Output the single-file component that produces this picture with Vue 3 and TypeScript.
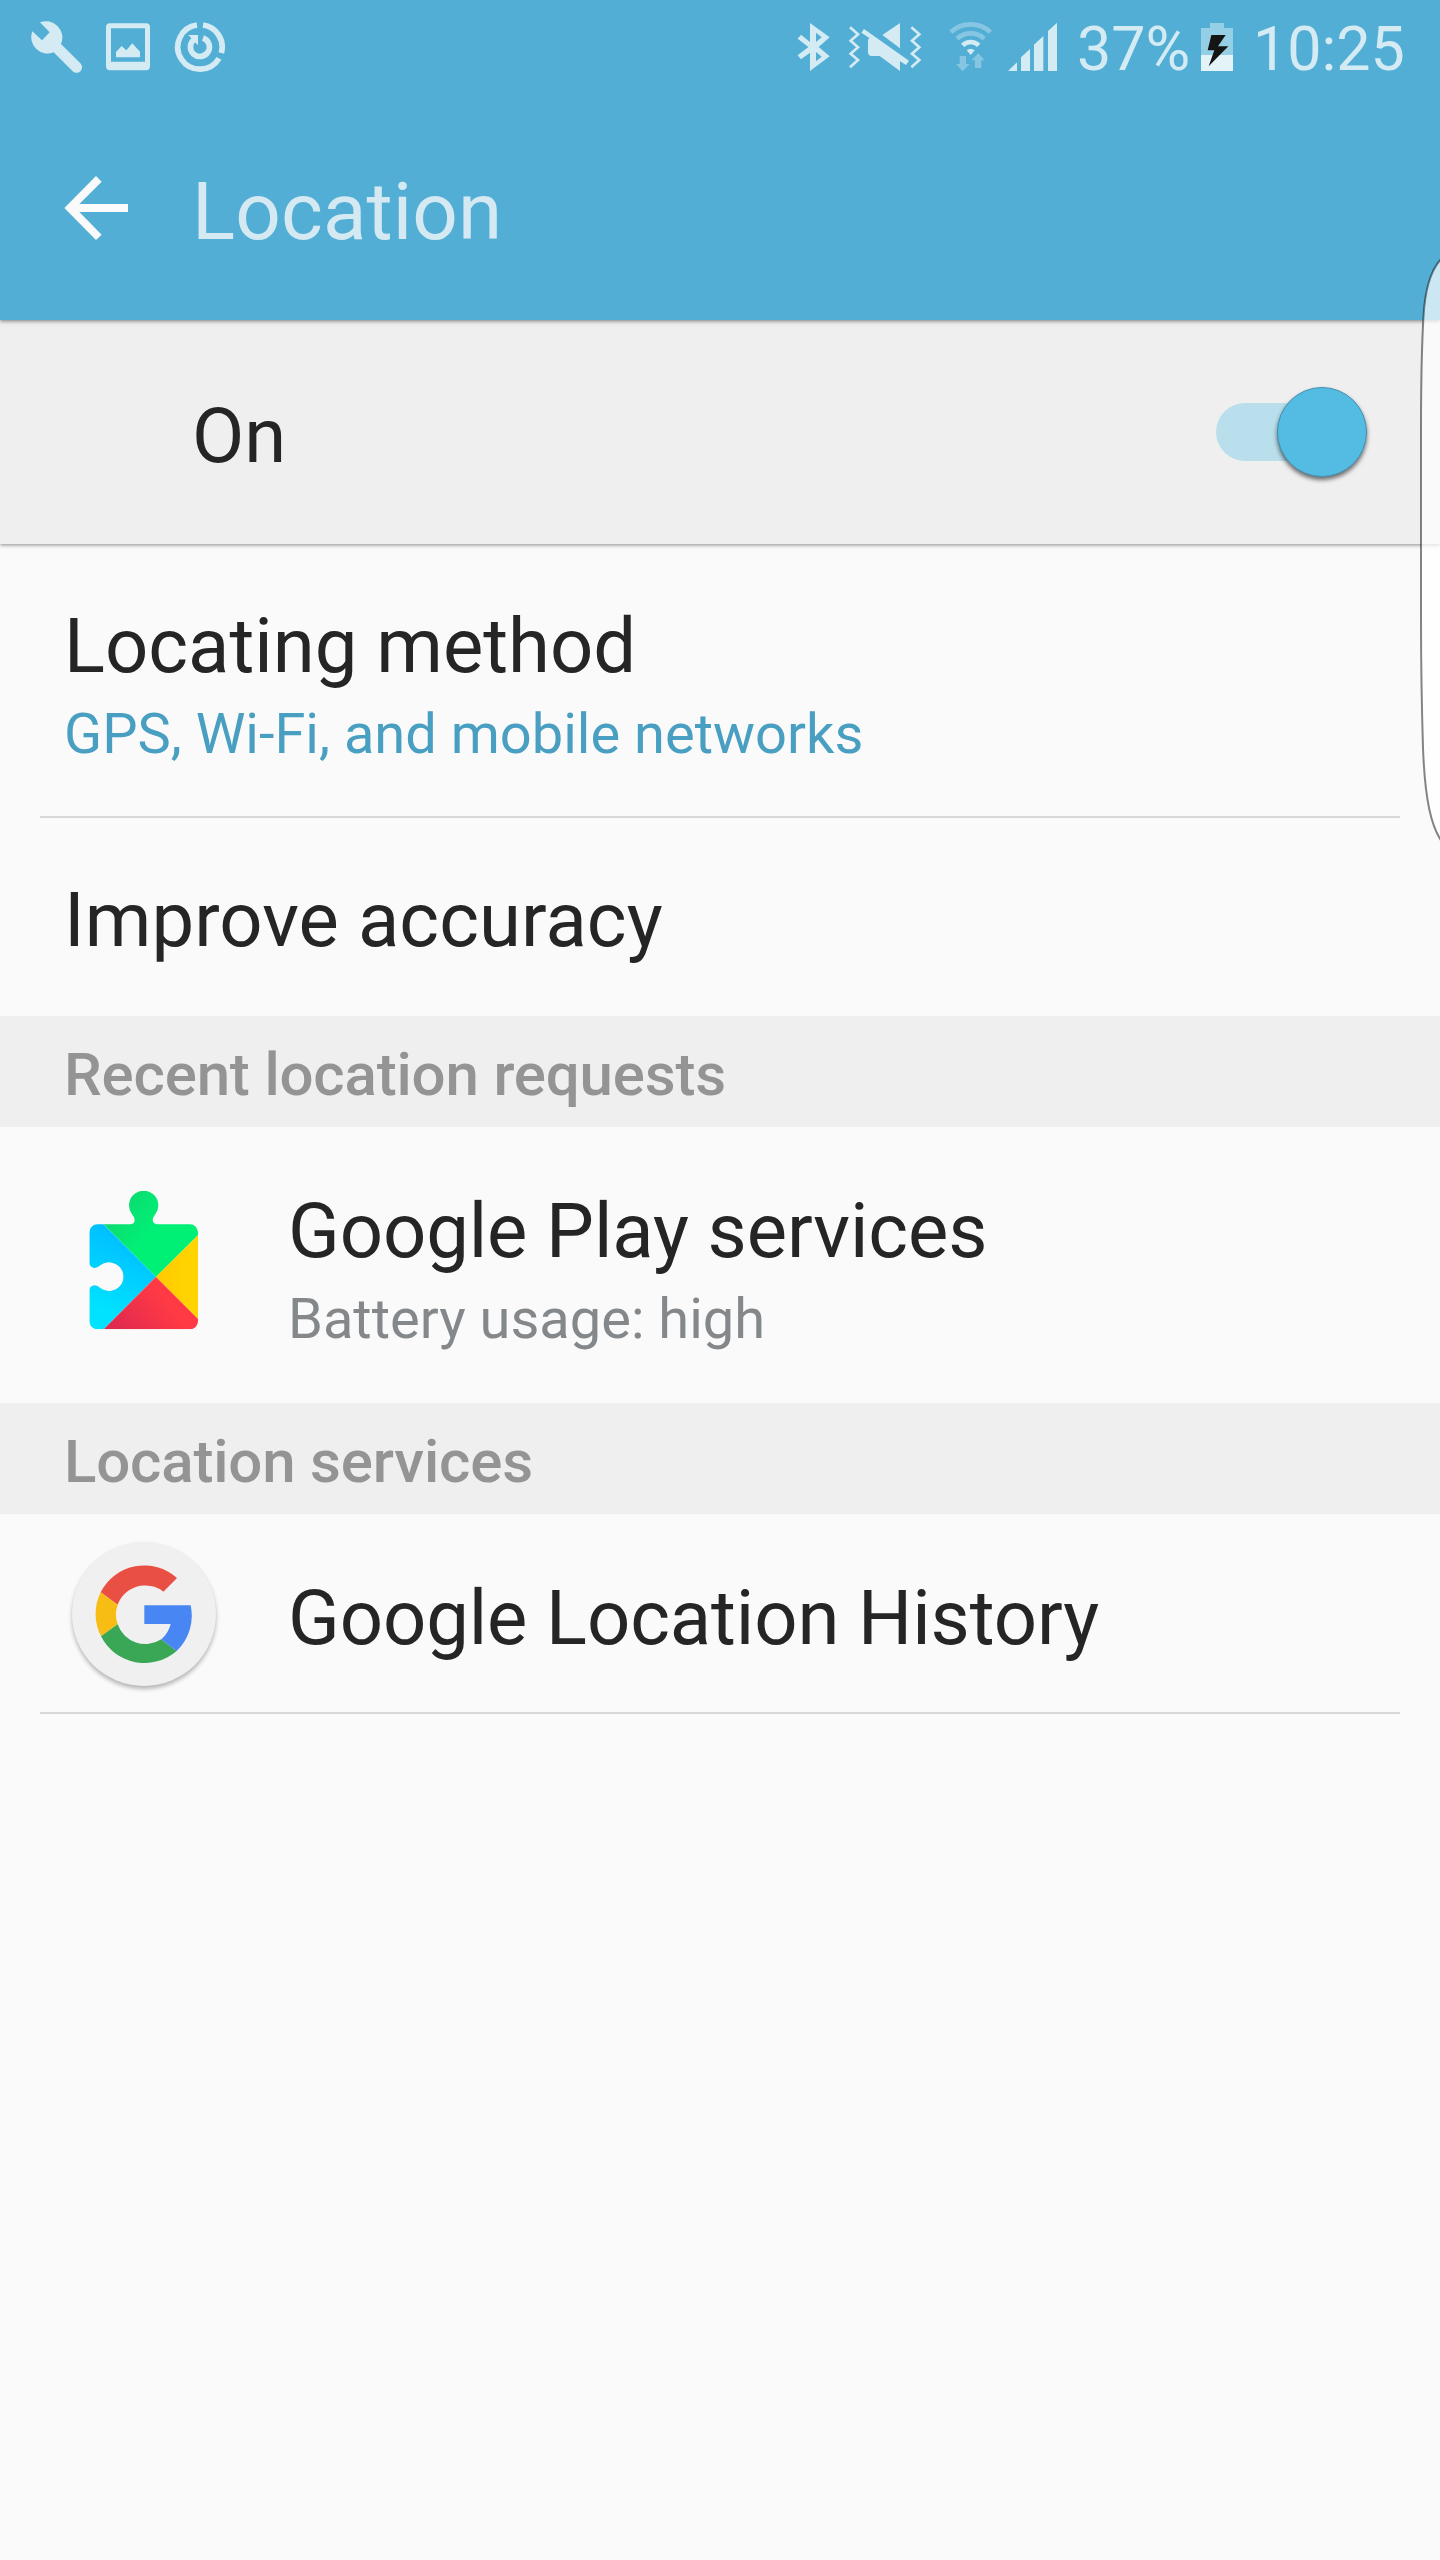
<script setup lang="ts">
import { ref } from 'vue'

const enabled = ref<boolean>(true)
const battery = '37%'
const clock = '10:25'
</script>

<template>
  <div class="screen">
    <header class="header">
      <div class="status">
        <div class="status-left">
          <svg class="wrench" width="54" height="54" viewBox="87 60 162 162">
            <path d="M120 67A49 49 0 0 1 183 132L241 190A15.500 15.500 0 0 1 218 214L161 157A49 49 0 0 1 97 94L126 121L149 97Z" />
          </svg>
          <svg class="gallery" width="44" height="48" viewBox="318 70 132 144">
            <path fill-rule="evenodd" d="M330 71H438Q450 71 450 83V200Q450 212 438 212H330Q318 212 318 200V83Q318 71 330 71ZM333 86V186H435V86ZM348 173V157L365 139L379 152L397 131L420 156V173Z" />
          </svg>
          <svg class="sync" width="52" height="52" viewBox="522 63 156 156">
            <g fill="none" stroke="#d4ebf4" stroke-width="17">
              <path d="M609 75.100A66.500 66.500 0 0 1 664 159" />
              <path d="M657 175A66.500 66.500 0 1 1 591 75.100" />
              <path d="M609 114A28.500 28.500 0 1 1 583 118" />
            </g>
            <path d="M565 105H594V136Z" />
          </svg>
        </div>
        <div class="status-right">
          <svg class="bluetooth" width="34" height="50" viewBox="51 66 102 150">
            <path fill-rule="evenodd" d="M90 69L149 112L116 141L149 169L90 213V158L63 178L53 166L85 141L53 116L63 104L90 126ZM108 98V126L125 112ZM108 156V184L125 170Z" />
          </svg>
          <svg class="mute" width="74" height="50" viewBox="204 66 222 150">
            <g fill="none" stroke="#d4ebf4" stroke-width="8">
              <path d="M210 82L234 103L212 122L234 142L212 161L234 180L210 202" />
              <path d="M394 82L418 103L396 122L418 142L396 161L418 180L394 202" />
            </g>
            <path d="M307 105L360 69V145Z" />
            <path d="M252 87L387 182L378 195L360 184V213L299 168H275Q264 168 264 156V122Q264 116 268 114L244 98Z" />
          </svg>
          <svg class="wifi" width="46" height="52" viewBox="504 63 138 156">
            <g fill="none" stroke="#d4ebf4" stroke-width="14">
              <path opacity=".4" d="M512.700 96.400A87 87 0 0 1 631.300 96.400" />
              <path opacity=".4" d="M531.100 116.100A60 60 0 0 1 612.900 116.100" />
              <path d="M548 136A34 34 0 0 1 596 136" />
            </g>
            <path d="M560 151Q572 141 584 151L572 165Z" />
            <path opacity=".4" d="M539 168H558V192H569L548 214L528 192H539ZM595 160L614 181H604V204H585V181H575Z" />
          </svg>
          <svg class="signal" width="50" height="50" viewBox="684 66 150 150">
            <path d="M684 213L711 187V213ZM723 213V172L750 147V213ZM762 213V134L790 108V213ZM804 213V93L831 68V213Z" />
          </svg>
          <span class="percent">{{ battery }}</span>
          <svg class="battery" width="32" height="48" viewBox="423 69 96 144">
            <path fill="#95cfe5" d="M450 69H492V84H519V165H423V84H450Z" />
            <path fill="#e4f3f8" d="M423 165H519V213H423Z" />
            <path fill="#151515" d="M454 105H497L474 139H505L446 199L463 151H443Z" />
          </svg>
          <span class="clock">{{ clock }}</span>
        </div>
      </div>
      <div class="toolbar">
        <svg class="back" width="64" height="66" viewBox="72 75 192 198">
          <path fill="#fafafa" d="M73 174L168 78L185 95L118 162H264V186H118L185 254L168 270Z" />
        </svg>
        <h1>Location</h1>
      </div>
    </header>

    <section class="master">
      <span class="title">On</span>
      <button class="switch" role="switch" :aria-checked="enabled" aria-label="Location" @click="enabled = !enabled">
        <span class="thumb" :class="{ off: !enabled }"></span>
      </button>
    </section>

    <main>
      <section class="row method">
        <div class="title">Locating method</div>
        <div class="sub accent">GPS, Wi-Fi, and mobile networks</div>
      </section>
      <div class="divider"></div>
      <section class="row improve">
        <div class="title">Improve accuracy</div>
      </section>
      <h2>Recent location requests</h2>
      <section class="row app play">
        <svg class="play-icon" width="120" height="150" viewBox="72 54 360 450">
          <defs>
            <clipPath id="piece">
              <path d="M112 163H212Q224 161 224 150Q223 140 216 133A44 44 0 1 1 286 133Q278 142 278 150Q279 161 291 163H390A24 24 0 0 1 414 187V454A24 24 0 0 1 390 478H112A24 24 0 0 1 88 454V360Q90 347 104 346Q113 346 121 354A43 43 0 1 0 121 286Q113 294 104 294Q90 292 88 280V187A24 24 0 0 1 112 163Z" />
            </clipPath>
            <linearGradient id="green" gradientUnits="userSpaceOnUse" x1="170" y1="130" x2="260" y2="200">
              <stop offset="0" stop-color="#0cdc70" />
              <stop offset="1" stop-color="#00f076" />
            </linearGradient>
            <linearGradient id="blue" gradientUnits="userSpaceOnUse" x1="190" y1="190" x2="90" y2="400">
              <stop offset="0" stop-color="#00beff" />
              <stop offset="1" stop-color="#00e2ff" />
            </linearGradient>
            <linearGradient id="red" gradientUnits="userSpaceOnUse" x1="310" y1="380" x2="170" y2="490">
              <stop offset="0" stop-color="#ff3a44" />
              <stop offset="1" stop-color="#df2850" />
            </linearGradient>
            <linearGradient id="yellow" x1="1" y1="0" x2="0" y2="0">
              <stop offset="0" stop-color="#ffd800" />
              <stop offset="1" stop-color="#ffca00" />
            </linearGradient>
          </defs>
          <g clip-path="url(#piece)">
            <path fill="url(#blue)" d="M60 92L288 320L60 549Z" />
            <path fill="url(#red)" d="M288 320L440 472V500H109Z" />
            <path fill="url(#yellow)" d="M288 320L440 169V472Z" />
            <path fill="url(#green)" d="M131 163V40H440V169L288 320Z" />
          </g>
        </svg>
        <div class="texts">
          <div class="title">Google Play services</div>
          <div class="sub">Battery usage: high</div>
        </div>
      </section>
      <h2>Location services</h2>
      <section class="row app history">
        <div class="google-icon">
          <svg width="98" height="98" viewBox="134 134 294 294">
            <path fill="#ea4f43" d="M151 216A146.500 146.500 0 0 1 380 173L339 214A88 88 0 0 0 202 253Z" />
            <path fill="#f8bd15" d="M151 216L202 253A88 88 0 0 0 202 312L152 348A146.500 146.500 0 0 1 151 216Z" />
            <path fill="#3aa757" d="M152 348L202 312A88 88 0 0 0 333 357L379 392A146.500 146.500 0 0 1 152 348Z" />
            <path fill="#4786f3" d="M282 255H421A146.500 146.500 0 0 1 379 392L333 357A88 88 0 0 0 361 311H282Z" />
          </svg>
        </div>
        <div class="title">Google Location History</div>
      </section>
      <div class="divider"></div>
    </main>

    <svg class="edge" width="24" height="600" viewBox="1416 250 24 600">
      <path
        fill="rgba(255,255,255,.7)"
        stroke="rgba(0,0,0,.48)"
        stroke-width="2"
        d="M1442 258C1430 270 1425 290 1423.500 316C1421.500 350 1421 380 1421 430V620C1421 680 1422 715 1423 748C1425 800 1431 826 1442 842Z"
      />
    </svg>
  </div>
</template>

<style>
body {
  margin: 0;
  background: #fafafa;
}
</style>

<style scoped>
.screen {
  position: relative;
  width: 1440px;
  height: 2560px;
  overflow: hidden;
  background: #fafafa;
  color: #252525;
  font-family: Roboto, 'Liberation Sans', sans-serif;
}
.header {
  position: relative;
  z-index: 1;
  height: 320px;
  background: #52aed5;
  box-shadow: 0 1px 4px rgba(0, 0, 0, 0.5);
}
.status {
  display: flex;
  justify-content: space-between;
  height: 96px;
  color: #d4ebf4;
  fill: #d4ebf4;
  font-size: 61px;
  line-height: 70px;
}
.status-left,
.status-right {
  display: flex;
  align-items: flex-start;
}
.status svg {
  flex: none;
}
.status span {
  flex: none;
  margin-top: 14px;
  white-space: nowrap;
}
.wrench {
  margin: 20px 0 0 29px;
}
.gallery {
  margin: 23.33px 0 0 23px;
}
.sync {
  margin: 21px 0 0 24px;
}
.status-right {
  width: 643px;
}
.bluetooth {
  margin-top: 22px;
}
.mute {
  margin: 22px 0 0 17px;
}
.wifi {
  margin: 21px 0 0 26px;
}
.signal {
  margin: 22px 0 0 14px;
}
.status .percent {
  width: 113px;
  margin-left: 19px;
}
.battery {
  margin: 23px 0 0 11px;
}
.status .clock {
  margin-left: 20px;
}
.toolbar {
  display: flex;
  align-items: flex-start;
}
.back {
  margin: 79px 0 0 64px;
}
h1 {
  margin: 69px 0 0 64px;
  font-size: 80px;
  line-height: 94px;
  font-weight: 400;
  letter-spacing: 0.1px;
  color: #d5e9f2;
}
.master {
  display: flex;
  justify-content: space-between;
  box-sizing: border-box;
  height: 224px;
  padding: 71px 73px 0 192px;
  background: #efefef;
  box-shadow: 0 1px 4px rgba(0, 0, 0, 0.45);
}
.title {
  font-size: 76px;
  line-height: 90px;
  white-space: nowrap;
}
.switch {
  display: flex;
  align-items: center;
  justify-content: flex-end;
  width: 151px;
  height: 58px;
  margin: 12px 0 0;
  padding: 0;
  border: 0;
  border-radius: 29px;
  background: linear-gradient(90deg, #b9dfec 120px, transparent 120px);
}
.thumb {
  flex: none;
  box-sizing: border-box;
  width: 90px;
  height: 90px;
  border: 1px solid #4291b0;
  border-radius: 50%;
  background: #54bbe2;
  box-shadow: 0 3px 4px rgba(0, 0, 0, 0.55);
}
.thumb.off {
  margin-right: auto;
}
.row {
  box-sizing: border-box;
  padding: 57px 64px 0;
}
.method {
  height: 272px;
}
.improve {
  height: 198px;
}
.improve .title {
  letter-spacing: 0.08px;
}
.sub {
  margin-top: 10px;
  font-size: 56px;
  line-height: 66px;
  color: #84888b;
  white-space: nowrap;
}
.accent {
  color: #499fc1;
}
.divider {
  height: 2px;
  margin: 0 40px;
  background: #d8d8d8;
}
h2 {
  box-sizing: border-box;
  height: 111px;
  margin: 0;
  padding: 24px 64px 0;
  background: #efefef;
  color: #949494;
  font-size: 60px;
  font-weight: 500;
  line-height: 70px;
  letter-spacing: -0.18px;
}
.app {
  display: flex;
  align-items: flex-start;
  padding-top: 59px;
}
.app .title {
  letter-spacing: -0.1px;
}
.play {
  height: 276px;
}
.history {
  height: 198px;
}
.play-icon {
  flex: none;
  margin: 2px 84px 0 20px;
}
.google-icon {
  display: flex;
  align-items: center;
  justify-content: center;
  flex: none;
  width: 144px;
  height: 144px;
  margin: -31px 72px 0 8px;
  border-radius: 50%;
  background: #f0f0f0;
  box-shadow: 0 3px 4px rgba(0, 0, 0, 0.28);
}
.edge {
  position: absolute;
  z-index: 2;
  top: 250px;
  right: 0;
}
</style>
